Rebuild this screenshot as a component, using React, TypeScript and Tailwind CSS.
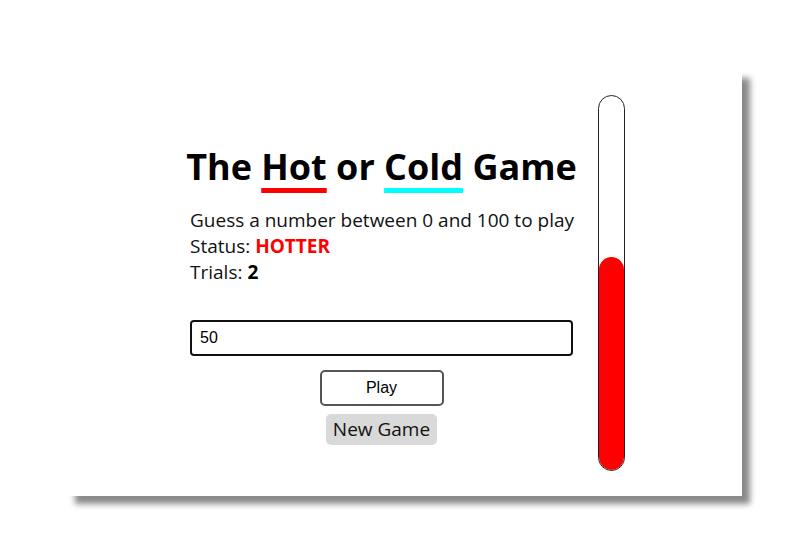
import { useState } from "react";

const Thermometer = ({ level }: { level: number }) => (
    <div className="w-[27px] h-[376px] border border-[#222] rounded-full overflow-hidden flex flex-col justify-end bg-white">
        <div className="w-full bg-[#ff0000] rounded-full" style={{ height: `${level}%` }} />
    </div>
);

const App = () => {
    const [guess, setGuess] = useState("50");
    const [trials] = useState(2);

    return (
        <main className="w-full min-h-screen bg-white pt-[70px] pl-[67px]">
            <div className="w-[675px] h-[426px] bg-white shadow-[8px_8px_6px_#8a8a8a] flex items-center justify-center gap-[25px] pl-[6px] font-['Open_Sans',sans-serif] text-[#111]">
                {/* Game panel */}
                <div className="w-[383px] flex flex-col items-center mt-[28px]">
                    <h1 className="text-[36px] font-bold leading-none text-black mb-[22px] whitespace-nowrap">
                        The{" "}
                        <span className="underline decoration-[#ff0000] decoration-[5px] underline-offset-[8px]">Hot</span>
                        {" "}or{" "}
                        <span className="underline decoration-[#00ffff] decoration-[5px] underline-offset-[8px]">Cold</span>
                        {" "}Game
                    </h1>
                    <div className="w-full text-[19px] leading-[26px]">
                        <p className="whitespace-nowrap">Guess a number between 0 and 100 to play</p>
                        <p>
                            Status: <span className="font-bold text-[#ff0000]">HOTTER</span>
                        </p>
                        <p>
                            Trials: <span className="font-bold text-black">{trials}</span>
                        </p>
                    </div>
                    <input
                        value={guess}
                        onChange={(e) => setGuess(e.target.value)}
                        className="mt-[35px] w-full h-[36px] border-2 border-[#111] rounded-[4px] px-[8px] font-['Liberation_Sans',sans-serif] text-[16px] text-black outline-none"
                    />
                    <button className="mt-[14px] w-[124px] h-[36px] border-2 border-[#555] rounded-[5px] bg-white font-['Liberation_Sans',sans-serif] text-[16px] text-black">
                        Play
                    </button>
                    <button className="mt-[8px] px-[7px] h-[31px] bg-[#d9d9d9] rounded-[5px] text-[19px] leading-[31px] text-[#111]">
                        New Game
                    </button>
                </div>

                <Thermometer level={57} />
            </div>
        </main>
    );
};

export default App;
